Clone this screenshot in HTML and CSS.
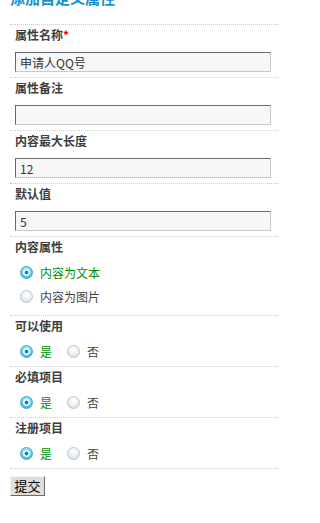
FILE: index.html
```html
<!DOCTYPE html>
<html lang="zh">
<head>
<meta charset="utf-8">
<title>属性设置</title>
<link rel="stylesheet" href="styles.css">
</head>
<body>
<div class="page">
  <h2 class="title">添加自定义属性</h2>
  <form class="form">
    <div class="row">
      <div class="label">属性名称<span class="req">*</span></div>
      <div class="field"><input class="text" type="text" value="申请人QQ号"></div>
    </div>
    <div class="row">
      <div class="label">属性备注</div>
      <div class="field"><input class="text" type="text" value=""></div>
    </div>
    <div class="row">
      <div class="label">内容最大长度</div>
      <div class="field"><input class="text" type="text" value="12"></div>
    </div>
    <div class="row">
      <div class="label">默认值</div>
      <div class="field"><input class="text" type="text" value="5"></div>
    </div>
    <div class="row">
      <div class="label">内容属性</div>
      <div class="opts vertical">
        <label class="opt on"><span class="radio"></span>内容为文本</label>
        <label class="opt"><span class="radio"></span>内容为图片</label>
      </div>
    </div>
    <div class="row">
      <div class="label">可以使用</div>
      <div class="opts">
        <label class="opt on"><span class="radio"></span>是</label>
        <label class="opt"><span class="radio"></span>否</label>
      </div>
    </div>
    <div class="row">
      <div class="label">必填项目</div>
      <div class="opts">
        <label class="opt on"><span class="radio"></span>是</label>
        <label class="opt"><span class="radio"></span>否</label>
      </div>
    </div>
    <div class="row">
      <div class="label">注册项目</div>
      <div class="opts">
        <label class="opt on"><span class="radio"></span>是</label>
        <label class="opt"><span class="radio"></span>否</label>
      </div>
    </div>
    <div class="actions">
      <button type="button" class="btn">提交</button>
    </div>
  </form>
</div>
</body>
</html>
```
FILE: styles.css
```css
html, body {
  margin: 0;
  padding: 0;
  background: #ffffff;
}

body {
  font-family: "Noto Sans CJK SC", "Liberation Sans", sans-serif;
  font-size: 12px;
  color: #444444;
  overflow: hidden;
}

.page {
  width: 268px;
  padding-left: 10px;
}

.title {
  margin: -12px 0 0 0;
  height: 36px;
  font-size: 15px;
  line-height: 20px;
  font-weight: bold;
  color: #1592d0;
}

.form {
  margin: 0;
}

.row {
  border-top: 1px dotted #a6d6f2;
  padding: 0 5px 3px 5px;
}

.label {
  height: 20px;
  line-height: 20px;
  font-weight: bold;
  color: #3e3e3e;
  font-size: 12px;
}

.req {
  color: #ee0000;
  font-weight: bold;
}

.field {
  padding-top: 7px;
  padding-bottom: 2px;
}

.text {
  box-sizing: border-box;
  display: block;
  width: 256px;
  height: 20px;
  margin: 0;
  padding: 0 4px;
  border: 1px solid;
  border-color: #6a6a6a #c9c9c9 #c9c9c9 #6a6a6a;
  background: #f7f7f7;
  font-family: "Noto Sans CJK SC", "Liberation Sans", sans-serif;
  font-size: 12px;
  line-height: 18px;
  color: #333333;
  outline: none;
}

.opts {
  display: flex;
  padding-top: 3px;
}

.opts.vertical {
  flex-direction: column;
  padding-bottom: 4px;
}

.opt {
  display: flex;
  align-items: center;
  height: 24px;
  padding-left: 5px;
  margin-right: 10px;
  color: #444444;
  font-size: 12px;
}

.opt.on {
  color: #009000;
}

.radio {
  box-sizing: border-box;
  width: 13px;
  height: 13px;
  border-radius: 50%;
  margin-right: 7px;
  border: 1px solid #b9c6cc;
  background: radial-gradient(circle at 50% 35%, #ffffff 0%, #eef2f4 45%, #c9d3d8 100%);
}

.opt.on .radio {
  border-color: #3aa8d0;
  background:
    radial-gradient(circle at 50% 50%, #2a7896 0, #2a7896 1.6px, #e9f8fd 2.2px, #e9f8fd 3.2px, transparent 3.8px),
    radial-gradient(circle at 50% 30%, #b8ecfb 0%, #6fd0f0 50%, #2ea3cf 100%);
}

.actions {
  border-top: 1px dotted #a6d6f2;
  padding-top: 7px;
}

.btn {
  box-sizing: border-box;
  width: 35px;
  height: 20px;
  margin: 0;
  padding: 0;
  border: 1px solid;
  border-color: #f4f4f4 #6a6a6a #6a6a6a #f4f4f4;
  background: #dedede;
  font-family: "Noto Sans CJK SC", "Liberation Sans", sans-serif;
  font-size: 13px;
  line-height: 18px;
  color: #000000;
}
```
